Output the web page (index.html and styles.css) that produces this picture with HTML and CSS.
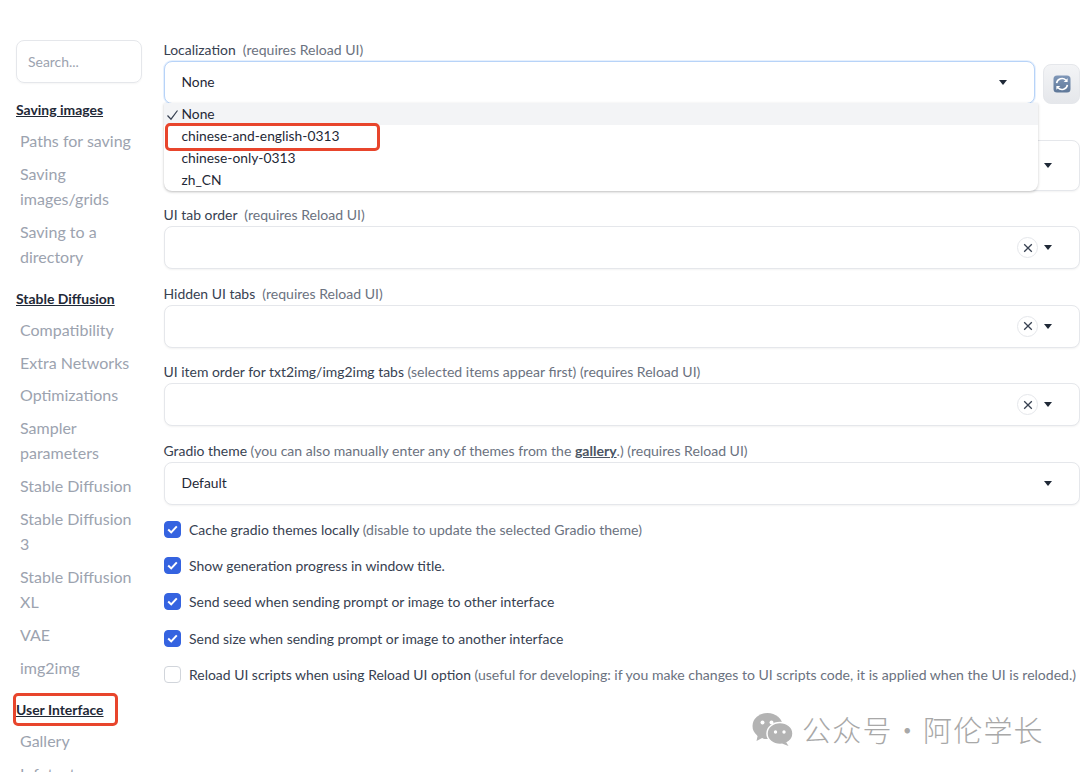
FILE: index.html
```html
<!DOCTYPE html>
<html lang="en">
<head>
<meta charset="utf-8">
<title>Settings</title>
<link rel="stylesheet" href="styles.css">
</head>
<body>
<div class="page">
  <aside class="sidebar">
    <div class="search">Search...</div>
    <nav class="nav">
      <a class="head">Saving images</a>
      <a class="item">Paths for saving</a>
      <a class="item">Saving images/grids</a>
      <a class="item">Saving to a directory</a>
      <a class="head later">Stable Diffusion</a>
      <a class="item">Compatibility</a>
      <a class="item">Extra Networks</a>
      <a class="item">Optimizations</a>
      <a class="item">Sampler parameters</a>
      <a class="item">Stable Diffusion</a>
      <a class="item">Stable Diffusion 3</a>
      <a class="item">Stable Diffusion XL</a>
      <a class="item">VAE</a>
      <a class="item">img2img</a>
      <a class="head later">User Interface</a>
      <a class="item">Gallery</a>
      <a class="item">Infotext</a>
    </nav>
  </aside>
  <main class="main">
    <section class="block first">
      <label class="label">Localization <span class="hint">&nbsp;(requires Reload UI)</span></label>
      <div class="with-btn">
        <div class="field focus"><span class="value">None</span><i class="caret"></i></div>
        <button class="refresh" aria-label="Refresh">
          <svg width="18" height="18" viewBox="0 0 18 18">
            <defs><linearGradient id="rg" x1="0" y1="0" x2="0" y2="1"><stop offset="0" stop-color="#7f97b8"/><stop offset="1" stop-color="#5f7899"/></linearGradient></defs>
            <rect x="0.5" y="0.5" width="17" height="17" rx="3.5" fill="url(#rg)"/>
            <path d="M3.6 8.2A5.5 5.5 0 0 1 13 5.2" fill="none" stroke="#fff" stroke-width="1.6"/>
            <path d="M14.6 3.2v3.9h-3.9z" fill="#fff"/>
            <path d="M14.4 9.8A5.5 5.5 0 0 1 5 12.8" fill="none" stroke="#fff" stroke-width="1.6"/>
            <path d="M3.4 14.8v-3.9h3.9z" fill="#fff"/>
          </svg>
        </button>
      </div>
      <ul class="menu">
        <li class="opt on"><svg class="tick" width="13" height="12" viewBox="0 0 13 12"><path d="M1.5 6.5 5 10.2 11.5 1.5" fill="none" stroke="#374151" stroke-width="1.2"/></svg>None</li>
        <li class="opt">chinese-and-english-0313</li>
        <li class="opt">chinese-only-0313</li>
        <li class="opt">zh_CN</li>
        <li class="mark mark-opt"></li>
      </ul>
    </section>
    <section class="block">
      <label class="label">Quicksettings list</label>
      <div class="field tall"><i class="caret"></i></div>
    </section>
    <section class="block">
      <label class="label">UI tab order <span class="hint">&nbsp;(requires Reload UI)</span></label>
      <div class="field"><span class="clear"><svg width="10" height="10" viewBox="0 0 10 10"><path d="M1.2 1.2 8.8 8.8M8.8 1.2 1.2 8.8" stroke="#374151" stroke-width="1.3"/></svg></span><i class="caret"></i></div>
    </section>
    <section class="block">
      <label class="label">Hidden UI tabs <span class="hint">&nbsp;(requires Reload UI)</span></label>
      <div class="field"><span class="clear"><svg width="10" height="10" viewBox="0 0 10 10"><path d="M1.2 1.2 8.8 8.8M8.8 1.2 1.2 8.8" stroke="#374151" stroke-width="1.3"/></svg></span><i class="caret"></i></div>
    </section>
    <section class="block">
      <label class="label">UI item order for txt2img/img2img tabs <span class="hint">(selected items appear first) (requires Reload UI)</span></label>
      <div class="field"><span class="clear"><svg width="10" height="10" viewBox="0 0 10 10"><path d="M1.2 1.2 8.8 8.8M8.8 1.2 1.2 8.8" stroke="#374151" stroke-width="1.3"/></svg></span><i class="caret"></i></div>
    </section>
    <section class="block">
      <label class="label">Gradio theme <span class="hint">(you can also manually enter any of themes from the <b class="link">gallery</b>.) (requires Reload UI)</span></label>
      <div class="field"><span class="value">Default</span><i class="caret"></i></div>
    </section>
    <div class="checks">
      <div class="check"><span class="box on"><svg width="11" height="9" viewBox="0 0 11 9"><path d="M1.2 4.6 4.2 7.4 9.8 1.4" fill="none" stroke="#fff" stroke-width="2"/></svg></span>Cache gradio themes locally&nbsp;<span class="hint">(disable to update the selected Gradio theme)</span></div>
      <div class="check"><span class="box on"><svg width="11" height="9" viewBox="0 0 11 9"><path d="M1.2 4.6 4.2 7.4 9.8 1.4" fill="none" stroke="#fff" stroke-width="2"/></svg></span>Show generation progress in window title.</div>
      <div class="check"><span class="box on"><svg width="11" height="9" viewBox="0 0 11 9"><path d="M1.2 4.6 4.2 7.4 9.8 1.4" fill="none" stroke="#fff" stroke-width="2"/></svg></span>Send seed when sending prompt or image to other interface</div>
      <div class="check"><span class="box on"><svg width="11" height="9" viewBox="0 0 11 9"><path d="M1.2 4.6 4.2 7.4 9.8 1.4" fill="none" stroke="#fff" stroke-width="2"/></svg></span>Send size when sending prompt or image to another interface</div>
      <div class="check"><span class="box"></span>Reload UI scripts when using Reload UI option&nbsp;<span class="hint">(useful for developing: if you make changes to UI scripts code, it is applied when the UI is reloded.)</span></div>
    </div>
  </main>
  <div class="mark mark-nav"></div>
  <div class="watermark">
    <svg width="42" height="34" viewBox="0 0 42 34">
      <ellipse cx="15.5" cy="14" rx="15" ry="13" fill="#b3b3b3"/>
      <path d="M6 22 4.5 29 12 25z" fill="#b3b3b3"/>
      <ellipse cx="28" cy="21.5" rx="13" ry="11" fill="#b3b3b3" stroke="#fff" stroke-width="1.5"/>
      <path d="M34 30 36.5 34 30 31.5z" fill="#b3b3b3"/>
      <circle cx="10.500" cy="10.500" r="2" fill="#fff"/><circle cx="19.500" cy="10.500" r="2" fill="#fff"/>
      <circle cx="23.500" cy="20" r="1.700" fill="#fff"/><circle cx="32" cy="20" r="1.700" fill="#fff"/>
    </svg>
    <span class="wm-text">公众号 · 阿伦学长</span>
  </div>
</div>
</body>
</html>
```
FILE: styles.css
```css
* { box-sizing: border-box; }
html, body { margin: 0; padding: 0; background: #fff; }
body { font-family: Lato, "Noto Sans", sans-serif; color: #374151; font-size: 13.950px; }
.page { position: relative; display: flex; width: 1080px; height: 772px; overflow: hidden; }

.sidebar { width: 163.500px; flex: none; padding: 40px 22px 0 16px; overflow: hidden; height: 772px; }
.search { height: 43px; border: 1px solid #e5e7eb; border-radius: 8px; padding: 0 11px; line-height: 41px; color: #9ca3af; box-shadow: 0 1px 2px rgba(0,0,0,.04); }
.nav { display: flex; flex-direction: column; margin-top: 16px; }
.head { font-weight: 700; text-decoration: underline; color: #1f2937; line-height: 22px; margin-bottom: 7px; }
.head.later { margin-top: 11px; margin-bottom: 7px; }
.item { font-size: 16px; line-height: 25px; color: #9ca3af; padding-left: 4px; margin-bottom: 7.900px; }

.main { flex: 1; min-width: 0; padding-top: 39px; display: flex; flex-direction: column; gap: 13.500px; }
.block { position: relative; display: flex; flex-direction: column; }
.label { line-height: 22px; height: 22px; white-space: nowrap; color: #374151; }
.hint { color: #6b7280; font-size: 14.050px; }
.link { font-weight: 700; text-decoration: underline; color: #4b5563; }
.with-btn { display: flex; gap: 8px; align-items: flex-end; }
.with-btn .field { flex: 1; }
.field { height: 43px; border: 1px solid #e5e7eb; border-radius: 8px; display: flex; align-items: center; justify-content: flex-end; padding: 0 27px 0 17px; box-shadow: 0 1px 2px rgba(0,0,0,.05); background: #fff; }
.field .value { margin-right: auto; margin-bottom: 2px; color: #1f2937; font-size: 13.800px; }
.field.tall { height: 51px; }
.field.focus { border-color: #b7d3f8; box-shadow: 0 0 0 1px rgba(183,211,248,.35); padding-right: 27px; }
.caret { width: 0; height: 0; border-left: 4.500px solid transparent; border-right: 4.500px solid transparent; border-top: 5px solid #1f2937; }
.clear { width: 21px; height: 21px; border: 1px solid #e5e7eb; border-radius: 50%; display: flex; align-items: center; justify-content: center; margin-right: 6px; }
.refresh { width: 37px; height: 40px; border: 1px solid #e5e7eb; border-radius: 8px; background: linear-gradient(#f3f4f6, #e5e7eb); padding: 0; display: flex; align-items: center; justify-content: center; flex: none; }

.menu { position: absolute; left: 0; top: 64px; width: 874px; margin: 0; padding: 0; list-style: none; background: #fff; border-radius: 0 0 8px 8px; box-shadow: 0 1px 3px rgba(0,0,0,.22); z-index: 3; font-size: 13.800px; }
.opt { position: relative; height: 22px; line-height: 22px; padding-left: 18px; color: #1f2937; }
.opt.on { background: #f3f4f6; }
.tick { position: absolute; left: 2px; top: 6px; }
.mark { position: absolute; border: 3px solid #e8452c; border-radius: 5px; }
.mark-opt { left: 1px; top: 20px; width: 215px; height: 28px; }
.mark-nav { left: 13px; top: 693px; width: 105px; height: 33px; z-index: 4; }

.checks { display: flex; flex-direction: column; gap: 15.200px; margin-top: 1px; }
.check { display: flex; align-items: center; height: 21px; white-space: nowrap; color: #374151; }
.box { width: 17px; height: 17px; border: 1px solid #d1d5db; border-radius: 4px; margin-right: 8.500px; display: flex; align-items: center; justify-content: center; flex: none; background: #fff; }
.box.on { background: #3563e0; border-color: #3563e0; }

.watermark { position: absolute; left: 752px; top: 710px; display: flex; align-items: center; gap: 8px; color: #a8a8a8; }
.wm-text { font-family: "Noto Sans CJK SC", sans-serif; font-size: 29px; font-weight: 300; letter-spacing: 1.200px; word-spacing: -7.500px; line-height: 38px; white-space: nowrap; }
```
